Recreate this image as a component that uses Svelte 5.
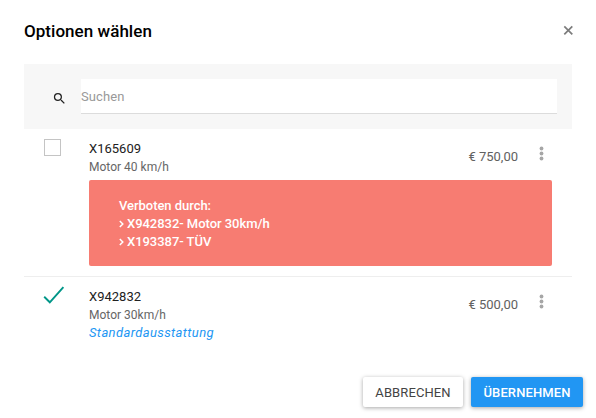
<script>
  const options = [
    {
      code: 'X165609',
      name: 'Motor 40 km/h',
      price: '€ 750,00',
      selected: false,
      forbidden: ['X942832- Motor 30km/h', 'X193387- TÜV']
    },
    {
      code: 'X942832',
      name: 'Motor 30km/h',
      price: '€ 500,00',
      selected: true,
      standard: true,
      forbidden: []
    }
  ];
</script>

<div class="dialog">
  <header>
    <h1>Optionen wählen</h1>
    <button class="close" aria-label="Schließen">
      <svg width="10" height="10" viewBox="0 0 10 10"><path d="M1.300 1.300l8 8M9.300 1.300l-8 8" fill="none" stroke="#7c7c7c" stroke-width="1.700" /></svg>
    </button>
  </header>

  <div class="search">
    <svg width="15" height="15" viewBox="0 0 24 24"><path fill="#222" d="M15.5 14h-.79l-.28-.27A6.471 6.471 0 0 0 16 9.5 6.5 6.5 0 1 0 9.5 16c1.61 0 3.09-.59 4.23-1.57l.27.28v.79l5 4.99L20.490 19l-4.990-5zm-6 0C7.010 14 5 11.990 5 9.500S7.010 5 9.500 5 14 7.010 14 9.500 11.990 14 9.500 14z" /></svg>
    <input placeholder="Suchen" />
  </div>

  <div class="list">
    {#each options as option}
      <div class="row">
        <div class="mark">
          {#if option.selected}
            <svg width="22" height="19" viewBox="0 0 22 19"><path d="M1.200 10.800L6.800 16.300L20.400 1.200" fill="none" stroke="#009688" stroke-width="1.900" /></svg>
          {:else}
            <span class="box"></span>
          {/if}
        </div>
        <div class="body">
          <div class="summary">
            <div class="info">
              <div class="code">{option.code}</div>
              <div class="name">{option.name}</div>
              {#if option.standard}<div class="standard">Standardausstattung</div>{/if}
            </div>
            <div class="price">{option.price}</div>
            <svg class="more" width="5" height="15" viewBox="0 0 5 15"><g fill="#a6a6a6"><circle cx="2.500" cy="2.500" r="1.900" /><circle cx="2.500" cy="7.500" r="1.900" /><circle cx="2.500" cy="12.500" r="1.900" /></g></svg>
          </div>
          {#if option.forbidden.length}
            <div class="alert">
              <div>Verboten durch:</div>
              {#each option.forbidden as item}
                <div class="item">
                  <svg width="5" height="8" viewBox="0 0 5 8"><path d="M.8 1l3 3-3 3" fill="none" stroke="#fff" stroke-width="1.500" /></svg>
                  <span>{item}</span>
                </div>
              {/each}
            </div>
          {/if}
        </div>
      </div>
    {/each}
  </div>

  <footer>
    <button class="btn cancel">ABBRECHEN</button>
    <button class="btn apply">ÜBERNEHMEN</button>
  </footer>
</div>

<style>
  :global(body) { background: #fff; }
  .dialog {
    box-sizing: border-box;
    height: 418px;
    padding: 0 24px;
    display: flex;
    flex-direction: column;
    font: 13px/18px Roboto, sans-serif;
    color: #212121;
    overflow: hidden;
  }
  header {
    display: flex;
    justify-content: space-between;
    height: 64px;
    flex: none;
  }
  h1 {
    margin: 19px 0 0;
    font-size: 17px;
    line-height: 24px;
    font-weight: 500;
    letter-spacing: 0.04px;
    color: #000;
  }
  button { font-family: inherit; border: 0; padding: 0; }
  .close { display: flex; width: 10px; height: 10px; margin: 25px -1px 0 0; background: none; }
  .search {
    box-sizing: border-box;
    display: flex;
    align-items: center;
    height: 65px;
    flex: none;
    padding: 0 15px 0 28px;
    background: #f7f7f7;
  }
  .search svg { flex: none; margin: 3px 14px 0 0; }
  input {
    box-sizing: border-box;
    flex: 1;
    height: 35px;
    min-width: 0;
    padding: 0;
    border: 0;
    border-bottom: 1px solid #dcdcdc;
    background: #fff;
    font: 13px Roboto, sans-serif;
    letter-spacing: 0.1px;
    outline: 0;
  }
  input::placeholder { color: #999; opacity: 1; }
  .row { display: flex; height: 147px; box-sizing: content-box; }
  .row + .row { border-top: 1px solid #eee; height: 90px; }
  .mark { width: 65px; box-sizing: border-box; padding: 10px 0 0 20px; flex: none; }
  .mark svg { display: block; margin-top: -1px; margin-left: -1px; }
  .box { display: block; width: 15px; height: 15px; border: 1px solid #c4c4c4; }
  .body { flex: 1; padding: 11px 20px 0 0; }
  .summary { display: flex; }
  .info { flex: 1; }
  .code { color: #212121; }
  .name { font-size: 12px; color: #666; letter-spacing: 0.01px; }
  .standard { color: #2196f3; font-style: italic; letter-spacing: 0.38px; }
  .price { margin-top: 8px; color: #616161; }
  .more { margin: 6px 8px 0 21px; }
  .alert {
    box-sizing: border-box;
    height: 86px;
    margin-top: 4px;
    padding: 17px 30px;
    border-radius: 2px;
    background: #f77c72;
    color: #fff;
    font-weight: 500;
    letter-spacing: -0.04px;
  }
  .item { display: flex; align-items: center; gap: 3px; }
  footer { display: flex; justify-content: flex-end; gap: 8px; margin: 10px -11px 0 0; }
  .btn {
    height: 30px;
    border-radius: 2px;
    font-size: 13px;
    letter-spacing: 0.1px;
    box-shadow: 0 1px 4px rgba(0, 0, 0, 0.35);
  }
  .cancel { width: 100px; background: #fff; color: #444; }
  .apply { width: 112px; background: #2196f3; color: #fff; font-weight: 500; }
</style>
